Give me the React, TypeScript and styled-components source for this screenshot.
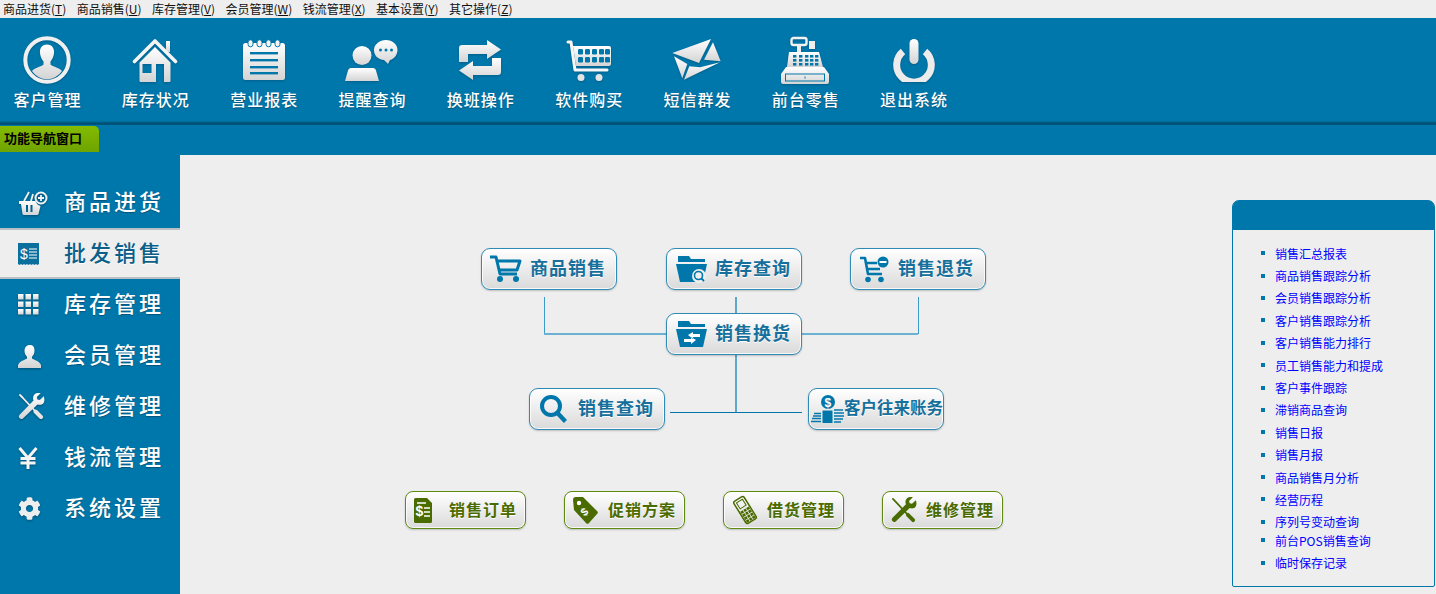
import React from 'react';
import styled, { createGlobalStyle } from 'styled-components';
import { FaCog } from 'react-icons/fa';

const BLUE = '#0077aa';
const CJK = '"Noto Sans CJK SC", "Liberation Sans", sans-serif';

const GlobalStyle = createGlobalStyle`
  html, body {
    margin: 0;
    padding: 0;
    background: #eeeeee;
  }
  body {
    width: 1436px;
    height: 594px;
    overflow: hidden;
    font-family: ${CJK};
  }
`;

const menuItems = [
  { label: '商品进货', key: 'T' },
  { label: '商品销售', key: 'U' },
  { label: '库存管理', key: 'V' },
  { label: '会员管理', key: 'W' },
  { label: '钱流管理', key: 'X' },
  { label: '基本设置', key: 'Y' },
  { label: '其它操作', key: 'Z' },
];

const reportLinks = [
  '销售汇总报表',
  '商品销售跟踪分析',
  '会员销售跟踪分析',
  '客户销售跟踪分析',
  '客户销售能力排行',
  '员工销售能力和提成',
  '客户事件跟踪',
  '滞销商品查询',
  '销售日报',
  '销售月报',
  '商品销售月分析',
  '经营历程',
  '序列号变动查询',
  '前台POS销售查询',
  '临时保存记录',
];

// shared gradients, referenced by the toolbar and sidebar icons
const SharedDefs = () => (
  <DefsHolder>
    <defs>
      <linearGradient id="silver" x1="0" y1="0" x2="0" y2="1">
        <stop offset="0" stopColor="#ffffff" />
        <stop offset="1" stopColor="#d4d4d4" />
      </linearGradient>
    </defs>
  </DefsHolder>
);

const S = 'url(#silver)';

const CustomerIcon = () => (
  <svg width="48" height="48" viewBox="0 0 48 48">
    <circle cx="24" cy="24" r="21.7" fill="none" stroke="#f0f0f0" strokeWidth="4" />
    <path fill={S} d="M24 8.500c-5 0-7.600 3.800-7 8.700.4 3.200 1.600 6.200 3.500 8.300v3c-2 2.200-8.500 3-11.500 6.500a17.800 17.800 0 0 0 30 0c-3-3.500-9.500-4.300-11.500-6.500v-3c1.900-2.100 3.100-5.100 3.500-8.300.6-4.900-2-8.700-7-8.700z" />
  </svg>
);

const HouseIcon = () => (
  <svg width="46" height="45" viewBox="0 0 46 45">
    <path fill={S} d="M34 3h4v11h-4z" />
    <path fill="none" stroke="#f4f4f4" strokeWidth="3.600" strokeLinecap="round" strokeLinejoin="round" d="M2.500 23.500 23 3l20.500 20.500" />
    <path fill={S} fillRule="evenodd" d="M23 9 38.500 24.500V43a1 1 0 0 1-1 1H32V26h-8v18H8.500a1 1 0 0 1-1-1V24.500zM10.500 26v9h9v-9z" />
  </svg>
);

const NotepadIcon = () => (
  <svg width="44" height="42" viewBox="0 0 44 42">
    <rect x="1" y="4" width="42" height="37" rx="2.500" fill={S} />
    {[6, 15, 24, 33].map((x) => (
      <rect key={x} x={x} y="0.800" width="5" height="7" rx="2.500" fill="#f4f4f4" stroke={BLUE} strokeWidth="1" />
    ))}
    {[13, 20, 27, 33].map((y) => (
      <rect key={y} x="8" y={y} width="28" height="2.400" fill={BLUE} />
    ))}
  </svg>
);

const ReminderIcon = () => (
  <svg width="54" height="44" viewBox="0 0 54 44">
    <circle cx="17" cy="17.500" r="9.500" fill={S} />
    <path fill={S} d="M6 30h22c1.500 0 2.500 1 3 2.500L34 43H0l3-10.500C3.500 31 4.500 30 6 30z" />
    <path fill={S} d="M41 2c6.500 0 11.500 4.500 11.500 10S48 21.500 45 22l-2 4-4-4c-6-.5-10-4.500-10-10S34.500 2 41 2z" />
    {[35.500, 41, 46.500].map((x) => (
      <circle key={x} cx={x} cy="12" r="1.500" fill={BLUE} />
    ))}
  </svg>
);

const SwapIcon = () => (
  <svg width="44" height="40" viewBox="0 0 44 40">
    <path fill={S} d="M1 22V8a3 3 0 0 1 3-3h25V0l14 9.500L29 19v-5H10v8z" />
    <path fill={S} d="M43 18v14a3 3 0 0 1-3 3H15v5L1 30.500 15 21v5h19v-8z" />
  </svg>
);

const BasketCartIcon = () => (
  <svg width="46" height="43" viewBox="0 0 46 43">
    <path fill="none" stroke="#f6f6f6" strokeWidth="3" strokeLinecap="round" strokeLinejoin="round" d="M2 3h3l4 28h32" />
    <path fill={S} d="M7 7h36a2 2 0 0 1 2 2v16a2 2 0 0 1-2 2H10z" />
    {[12, 19, 26, 33, 39].map((x) =>
      [10, 18].map((y) => <rect key={`${x}-${y}`} x={x} y={y} width="5" height="5.500" rx="1.200" fill={BLUE} />),
    )}
    <circle cx="15" cy="38.500" r="3.500" fill="#e4e4e4" />
    <circle cx="33" cy="38.500" r="3.500" fill="#e4e4e4" />
  </svg>
);

const EnvelopeIcon = () => (
  <svg width="49" height="42" viewBox="0 0 49 42">
    <path fill={S} d="M.3 14 39 0 27 24z" />
    <path fill={S} d="M41 3.300 48.700 22.300 32 20.700z" />
    <path fill={S} d="M2 17.300 15.300 25 10.300 39.300z" />
    <path fill={S} d="M17.300 27.300 28 28.300 48 23.300 12 40.700z" />
  </svg>
);

const RegisterIcon = () => (
  <svg width="50" height="49" viewBox="0 0 50 49">
    <rect x="11.500" y="2" width="15" height="7" rx="2" fill="none" stroke="#f2f2f2" strokeWidth="2.400" />
    <rect x="17" y="9" width="4" height="7" fill="#eeeeee" />
    <rect x="29" y="5" width="6" height="8" fill="#eeeeee" />
    <path fill={S} d="M9 16h30l4 15H7z" />
    {[13, 19, 25, 30, 35].map((x) =>
      [19, 23, 27].map((y) => <rect key={`${x}-${y}`} x={x} y={y} width="3.400" height="2.600" fill={BLUE} />),
    )}
    <path fill={S} d="M6 31h38l5 7v8a2 2 0 0 1-2 2H3a2 2 0 0 1-2-2v-8z" />
    <rect x="5.500" y="38" width="39" height="7" fill="none" stroke={BLUE} strokeWidth="1" />
    <rect x="24.500" y="40.500" width="1" height="2" fill={BLUE} />
  </svg>
);

const PowerIcon = () => (
  <svg width="44" height="44" viewBox="0 0 44 44">
    <path fill="none" stroke="#ececec" strokeWidth="7" d="M11 13.500a17.300 17.300 0 1 0 22 0" />
    <rect x="17.500" y="1" width="9" height="25" rx="4.500" fill={S} />
  </svg>
);

const toolbarItems = [
  { label: '客户管理', icon: <CustomerIcon /> },
  { label: '库存状况', icon: <HouseIcon /> },
  { label: '营业报表', icon: <NotepadIcon /> },
  { label: '提醒查询', icon: <ReminderIcon /> },
  { label: '换班操作', icon: <SwapIcon /> },
  { label: '软件购买', icon: <BasketCartIcon /> },
  { label: '短信群发', icon: <EnvelopeIcon /> },
  { label: '前台零售', icon: <RegisterIcon /> },
  { label: '退出系统', icon: <PowerIcon /> },
];

const BasketIcon = () => (
  <svg width="30" height="28" viewBox="0 0 30 28">
    <circle cx="23" cy="9" r="5.500" fill="none" stroke="#f2f2f2" strokeWidth="2" />
    <path stroke="#f2f2f2" strokeWidth="1.800" d="M20 9h6M23 6v6" />
    <path fill="none" stroke="#f2f2f2" strokeWidth="1.800" d="M6 12l5-9M13 12l2-7" />
    <path fill={S} fillRule="evenodd" d="M1 12h16.500a7.500 7.500 0 0 0 5 5L20.500 25a1.500 1.500 0 0 1-1.500 1H6a1.500 1.500 0 0 1-1.500-1L3 15H1zM8 16v7h2v-7zM12.500 16v7h2v-7z" />
  </svg>
);

const ReceiptIcon = () => (
  <svg width="22" height="24" viewBox="0 0 22 24">
    <path fill="#0b6f9e" d="M0 1h21v21l-1.500 1-1.500-1-1.500 1-1.500-1-1.500 1-1.500-1-1.500 1-1.500-1-1.500 1-1.500-1-1.500 1-1.500-1-1.500 1L0 22z" />
    <GlyphText x="2" y="16.500" fontSize="14" fill="#ffffff">$</GlyphText>
    <path stroke="#ffffff" strokeWidth="1.200" d="M11 7h8M11 10h8M11 13h8M11 16h8" />
  </svg>
);

const GridIcon = () => (
  <svg width="21" height="21" viewBox="0 0 21 21">
    {[0, 7.500, 15].map((x) =>
      [0, 7.500, 15].map((y) => <rect key={`${x}-${y}`} x={x} y={y} width="5.500" height="5.500" fill={S} />),
    )}
  </svg>
);

const UserIcon = () => (
  <svg width="24" height="24" viewBox="0 0 24 24">
    <path fill={S} d="M12 1c-3.600 0-5.500 2.600-5.500 5.800 0 2.400 1 4.700 2.500 6v1.700C7 16 1.500 17 0 21v3h23v-3c-1.500-4-7-5-9-6.500v-1.700c1.500-1.300 2.500-3.600 2.500-6C16.500 3.600 15.600 1 12 1z" />
  </svg>
);

const ToolsIcon = ({ color = S, size = 27 }: { color?: string; size?: number }) => (
  <svg width={size} height={size} viewBox="0 0 27 27">
    <path fill="none" stroke={color === S ? '#f0f0f0' : color} strokeWidth="1.800" strokeLinecap="round" d="M2 2l3 3 M4 4l14 15" />
    <path stroke={color === S ? '#e6e6e6' : color} strokeWidth="4" strokeLinecap="round" d="M17.500 18.500l5.500 5.500" />
    <path fill={color} d="M25.800 3.300l-4 3.800-2.400-.5-.6-2.500 3.800-3.900c-3.200-.8-6.300.3-7.300 3.200-.5 1.500-.3 3 .2 4.200L1.400 21.900a2.500 2.500 0 0 0 3.500 3.500L19.500 11.400c1.300.5 2.900.6 4.300.1 2.900-1.100 3.100-5.300 2-8.200z" />
  </svg>
);

const YenIcon = () => (
  <svg width="20" height="22" viewBox="0 0 20 22">
    <path fill="none" stroke="#f4f4f4" strokeWidth="3" d="M1.500 1l8.500 10 8.500-10M10 11v11M2.500 11.500h15M2.500 16h15" />
  </svg>
);

const sidebarItems = [
  { label: '商品进货', icon: <BasketIcon /> },
  { label: '批发销售', icon: <ReceiptIcon />, active: true },
  { label: '库存管理', icon: <GridIcon /> },
  { label: '会员管理', icon: <UserIcon /> },
  { label: '维修管理', icon: <ToolsIcon /> },
  { label: '钱流管理', icon: <YenIcon /> },
  { label: '系统设置', icon: <FaCog size={23} color="#eeeeee" /> },
];

const CartLine = () => (
  <svg width="33" height="28" viewBox="0 0 33 28">
    <path fill="none" stroke={BLUE} strokeWidth="3" strokeLinejoin="round" d="M0 2h6l4 17h17M7 6h23l-3 9H9" />
    <circle cx="10" cy="24" r="3" fill={BLUE} />
    <circle cx="26" cy="24" r="3" fill={BLUE} />
  </svg>
);

const FolderBase = ({ children }: { children: React.ReactNode }) => (
  <svg width="32" height="27" viewBox="0 0 32 27">
    <path fill={BLUE} d="M2 0h11l2 3h14v3H2z" />
    <path fill={BLUE} d="M0 8h31l-4 18H4z" />
    {children}
  </svg>
);

const FolderSearch = () => (
  <FolderBase>
    <circle cx="23" cy="20" r="7" fill="#eeeeee" />
    <circle cx="22.500" cy="19.500" r="4" fill="none" stroke={BLUE} strokeWidth="1.600" />
    <path stroke={BLUE} strokeWidth="1.800" d="M25.500 22.500l2.500 2.500" />
  </FolderBase>
);

const FolderSwap = () => (
  <FolderBase>
    <path fill="#ffffff" d="M12 14l5-3v2h7v3h-7v2zM20 19l-5-3v2H8v3h7v2z" />
  </FolderBase>
);

const CartMinus = () => (
  <svg width="29" height="27" viewBox="0 0 29 27">
    <path fill="none" stroke={BLUE} strokeWidth="2.600" strokeLinejoin="round" d="M0 2h5l3 16h14M6 7h11M7 13h13" />
    <circle cx="23" cy="6" r="5.500" fill={BLUE} />
    <rect x="19.500" y="5" width="7" height="2" fill="#ffffff" />
    <circle cx="8" cy="23.500" r="2.800" fill={BLUE} />
    <circle cx="21" cy="23.500" r="2.800" fill={BLUE} />
  </svg>
);

const Magnifier = () => (
  <svg width="27" height="28" viewBox="0 0 27 28">
    <circle cx="11" cy="11" r="9" fill="none" stroke={BLUE} strokeWidth="4" />
    <path stroke={BLUE} strokeWidth="4.400" d="M17.500 18l8 8.500" />
  </svg>
);

const MoneyStack = () => (
  <svg width="33" height="28" viewBox="0 0 33 28">
    <circle cx="17" cy="7" r="7" fill={BLUE} />
    <GlyphText x="13.500" y="11.500" fontSize="12" fontWeight="700" fill="#ffffff">$</GlyphText>
    <path fill={BLUE} d="M11.500 15.500h10v12.500h-10z" />
    <path stroke={BLUE} strokeWidth="1.500" d="M3 18.500h7M2 21h8M1 23.500h9M0 26.500h10M23 15h9M23 18h10M23 21h10M23 24h9M23 27h7" />
  </svg>
);

const G = '#4a6b00';

const OrderDoc = () => (
  <svg width="18" height="25" viewBox="0 0 18 25">
    <path fill={G} d="M1.500 0H13l5 5v18.500a1.500 1.500 0 0 1-1.500 1.500h-15A1.500 1.500 0 0 1 0 23.500v-22A1.500 1.500 0 0 1 1.500 0z" />
    <GlyphText x="1.500" y="18" fontSize="14" fontWeight="700" fill="#ffffff">$</GlyphText>
    <path stroke="#ffffff" strokeWidth="1.400" d="M3 5h9M10 10h6M10 14h6M10 18h6" />
  </svg>
);

const PriceTag = () => (
  <svg width="25" height="27" viewBox="0 0 25 27">
    <path fill={G} d="M0 3a3 3 0 0 1 3-3h7l14 14a2 2 0 0 1 0 3l-8 9a2 2 0 0 1-3 0L1 13z" />
    <circle cx="6" cy="6" r="2.200" fill="#ffffff" />
    <GlyphText x="8" y="18" fontSize="11" fontWeight="700" fill="#ffffff" transform="rotate(-40 12 14)">$</GlyphText>
  </svg>
);

const Handset = () => (
  <svg width="26" height="30" viewBox="0 0 26 30">
    <g transform="rotate(-32 13 15)">
      <rect x="7" y="2" width="12" height="26" rx="2" fill="none" stroke={G} strokeWidth="1.500" />
      <rect x="9.500" y="4.500" width="7" height="7" fill="none" stroke={G} strokeWidth="1" />
      <rect x="8" y="14" width="10" height="13" fill={G} />
      <path stroke="#eeeeee" strokeWidth="0.800" d="M8 17h10M8 20.500h10M8 24h10M11.300 14v13M14.700 14v13" />
    </g>
  </svg>
);

const blueNodes = [
  { label: '商品销售', icon: <CartLine />, x: 301, y: 93, pad: 8, gap: 7 },
  { label: '库存查询', icon: <FolderSearch />, x: 486, y: 93, pad: 9, gap: 7 },
  { label: '销售退货', icon: <CartMinus />, x: 670, y: 93, pad: 9, gap: 9 },
  { label: '销售换货', icon: <FolderSwap />, x: 486, y: 158, pad: 9, gap: 7 },
  { label: '销售查询', icon: <Magnifier />, x: 349, y: 233, pad: 10, gap: 11 },
  { label: '客户往来账务', icon: <MoneyStack />, x: 628, y: 233, pad: 2, gap: 0, tight: true },
];

const connectors = [
  { x: 364, y: 142, w: 1, h: 37, color: '#3a9cc6' },
  { x: 364, y: 178, w: 122, h: 2, color: '#6cb0d2' },
  { x: 622, y: 178, w: 116, h: 2, color: '#6cb0d2' },
  { x: 738, y: 142, w: 1, h: 37, color: '#3a9cc6' },
  { x: 555, y: 142, w: 2, h: 16, color: '#5fa8cd' },
  { x: 555, y: 200, w: 2, h: 57, color: '#5fa8cd' },
  { x: 490, y: 257, w: 132, h: 1, color: BLUE },
];

const greenButtons = [
  { label: '销售订单', icon: <OrderDoc /> },
  { label: '促销方案', icon: <PriceTag /> },
  { label: '借货管理', icon: <Handset /> },
  { label: '维修管理', icon: <ToolsIcon color={G} size={26} /> },
];

const App = () => {
  return (
    <Page>
      <GlobalStyle />
      <SharedDefs />
      <MenuBar>
        {menuItems.map((item) => (
          <MenuItem key={item.key}>
            {item.label}(<u>{item.key}</u>)
          </MenuItem>
        ))}
      </MenuBar>
      <Toolbar>
        {toolbarItems.map((item) => (
          <ToolItem key={item.label}>
            <ToolIcon>{item.icon}</ToolIcon>
            <ToolLabel>{item.label}</ToolLabel>
          </ToolItem>
        ))}
      </Toolbar>
      <NavBar>
        <NavTab>功能导航窗口</NavTab>
      </NavBar>
      <Body>
        <Sidebar>
          {sidebarItems.map((item) => (
            <SideRow key={item.label} $active={item.active}>
              <SideIcon $active={item.active}>{item.icon}</SideIcon>
              <SideLabel $active={item.active}>{item.label}</SideLabel>
            </SideRow>
          ))}
        </Sidebar>
        <Center>
          <Diagram>
            {connectors.map((line) => (
              <Connector
                key={`${line.x}-${line.y}-${line.w}`}
                $x={line.x}
                $y={line.y}
                $w={line.w}
                $h={line.h}
                $color={line.color}
              />
            ))}
            {blueNodes.map((node) => (
              <BlueNode key={node.label} $x={node.x} $y={node.y} $pad={node.pad} $gap={node.gap}>
                {node.icon}
                <BlueLabel $tight={node.tight}>{node.label}</BlueLabel>
              </BlueNode>
            ))}
          </Diagram>
          <GreenRow>
            {greenButtons.map((button) => (
              <GreenButton key={button.label}>
                <GreenIcon>{button.icon}</GreenIcon>
                <GreenLabel>{button.label}</GreenLabel>
              </GreenButton>
            ))}
          </GreenRow>
        </Center>
        <ReportPanel>
          <PanelHead />
          <ReportList>
            {reportLinks.map((link) => (
              <ReportItem key={link} $pulled={link.startsWith('前台POS')}>
                <a>{link}</a>
              </ReportItem>
            ))}
          </ReportList>
        </ReportPanel>
      </Body>
    </Page>
  );
};

export default App;

const DefsHolder = styled.svg`
  position: absolute;
  width: 0;
  height: 0;
`;

const GlyphText = styled.text`
  font-family: 'Liberation Sans', sans-serif;
`;

const Page = styled.div`
  display: flex;
  flex-direction: column;
  width: 1436px;
  height: 594px;
  overflow: hidden;
  background: #eeeeee;
`;

const MenuBar = styled.div`
  display: flex;
  align-items: center;
  gap: 10.450px;
  height: 18px;
  padding-left: 3px;
  box-sizing: border-box;
  background: #eeeeee;
`;

const MenuItem = styled.span`
  font-family: ${CJK};
  font-size: 12px;
  line-height: 16px;
  color: #111111;
  white-space: nowrap;
`;

const Toolbar = styled.div`
  display: flex;
  gap: 28.330px;
  height: 107px;
  padding-left: 7px;
  box-sizing: border-box;
  background: linear-gradient(to bottom, ${BLUE} 0, ${BLUE} 103px, #00618a 104px, #004a6b 106px, #005f88 107px);
`;

const ToolItem = styled.div`
  display: flex;
  flex-direction: column;
  align-items: center;
  width: 80px;
  padding-top: 16px;
  box-sizing: border-box;
`;

const ToolIcon = styled.div`
  display: flex;
  align-items: center;
  justify-content: center;
  height: 52px;
  filter: drop-shadow(0 1px 1px rgba(0, 50, 80, 0.35));
`;

const ToolLabel = styled.div`
  margin-top: 1px;
  padding-left: 1px;
  font-family: ${CJK};
  font-size: 16px;
  font-weight: 500;
  letter-spacing: 1px;
  line-height: 24px;
  color: #ffffff;
  white-space: nowrap;
  text-shadow: 0 1px 1px rgba(0, 50, 80, 0.5);
`;

const NavBar = styled.div`
  height: 30px;
  padding-top: 1px;
  box-sizing: border-box;
  background: ${BLUE};
`;

const NavTab = styled.div`
  display: flex;
  align-items: center;
  width: 99px;
  height: 26px;
  padding: 0 0 3px 4px;
  box-sizing: border-box;
  border-top-right-radius: 5px;
  background: linear-gradient(to bottom, #84bb00, #6ea400);
  font-family: ${CJK};
  font-size: 13px;
  font-weight: 700;
  color: #000000;
  white-space: nowrap;
`;

const Body = styled.div`
  display: flex;
  flex: 1;
  min-height: 0;
`;

const Sidebar = styled.div`
  display: flex;
  flex-direction: column;
  width: 180px;
  flex-shrink: 0;
  padding-top: 22px;
  box-sizing: border-box;
  background: ${BLUE};
`;

const SideRow = styled.div<{ $active?: boolean }>`
  display: flex;
  align-items: center;
  height: 51px;
  padding-left: 18px;
  box-sizing: border-box;
  ${(p) =>
    p.$active
      ? `
    background: #eeeeee;
    border-top: 2px solid #b9c0c4;
    border-bottom: 2px solid #b9c0c4;
  `
      : ''}
`;

const SideIcon = styled.div<{ $active?: boolean }>`
  display: flex;
  align-items: center;
  width: 46px;
  flex-shrink: 0;
  filter: ${(p) => (p.$active ? 'none' : 'drop-shadow(0 1px 1px rgba(0, 40, 70, 0.5))')};
`;

const SideLabel = styled.div<{ $active?: boolean }>`
  padding-bottom: 5px;
  font-family: ${CJK};
  font-size: 22px;
  font-weight: 500;
  letter-spacing: 3px;
  line-height: 30px;
  white-space: nowrap;
  color: ${(p) => (p.$active ? '#0b5f88' : '#ffffff')};
  text-shadow: ${(p) => (p.$active ? '0 1px 0 #ffffff' : '0 1px 1px rgba(0, 50, 80, 0.5)')};
`;

const Center = styled.div`
  display: flex;
  flex-direction: column;
  flex: 1;
  min-width: 0;
`;

const Diagram = styled.div`
  position: relative;
  height: 336px;
  flex-shrink: 0;
`;

const Connector = styled.div<{ $x: number; $y: number; $w: number; $h: number; $color: string }>`
  position: absolute;
  left: ${(p) => p.$x}px;
  top: ${(p) => p.$y}px;
  width: ${(p) => p.$w}px;
  height: ${(p) => p.$h}px;
  background: ${(p) => p.$color};
`;

const BlueNode = styled.div<{ $x: number; $y: number; $pad: number; $gap: number }>`
  position: absolute;
  left: ${(p) => p.$x}px;
  top: ${(p) => p.$y}px;
  display: flex;
  align-items: center;
  gap: ${(p) => p.$gap}px;
  width: 136px;
  height: 42px;
  padding-left: ${(p) => p.$pad}px;
  box-sizing: border-box;
  border: 1px solid #2f8ab5;
  border-radius: 9px;
  background: linear-gradient(to bottom, #ffffff, #dadada);
  box-shadow: inset 0 0 0 1px rgba(255, 255, 255, 0.8), 0 1px 2px rgba(0, 0, 0, 0.2);
`;

const BlueLabel = styled.span<{ $tight?: boolean }>`
  padding-bottom: 4px;
  font-family: ${CJK};
  font-size: ${(p) => (p.$tight ? '16.500px' : '18px')};
  font-weight: 700;
  letter-spacing: ${(p) => (p.$tight ? '0' : '1px')};
  color: #17709c;
  white-space: nowrap;
  text-shadow: 0 1px 0 #ffffff;
`;

const GreenRow = styled.div`
  display: flex;
  gap: 38px;
  padding-left: 225px;
`;

const GreenButton = styled.div`
  display: flex;
  align-items: center;
  width: 121px;
  height: 38px;
  padding-left: 8px;
  box-sizing: border-box;
  border: 1px solid #5e8a10;
  border-radius: 8px;
  background: linear-gradient(to bottom, #ffffff, #dadada);
  box-shadow: inset 0 0 0 1px rgba(255, 255, 255, 0.8), 0 1px 2px rgba(0, 0, 0, 0.2);
`;

const GreenIcon = styled.div`
  display: flex;
  justify-content: flex-start;
  width: 27px;
  flex-shrink: 0;
`;

const GreenLabel = styled.span`
  margin-left: 8px;
  padding-bottom: 2px;
  font-family: ${CJK};
  font-size: 16px;
  font-weight: 700;
  letter-spacing: 1px;
  color: #4a6b00;
  white-space: nowrap;
  text-shadow: 0 1px 0 #ffffff;
`;

const ReportPanel = styled.div`
  display: flex;
  flex-direction: column;
  width: 203px;
  height: 387px;
  margin-top: 45px;
  margin-right: 1px;
  box-sizing: border-box;
  flex-shrink: 0;
  border: 1px solid ${BLUE};
  border-radius: 7px 7px 2px 2px;
`;

const PanelHead = styled.div`
  height: 29px;
  flex-shrink: 0;
  background: ${BLUE};
  border-radius: 5px 5px 0 0;
`;

const ReportList = styled.ul`
  margin: 0;
  padding: 12px 0 0 28px;
  list-style: none;
`;

const ReportItem = styled.li<{ $pulled?: boolean }>`
  display: flex;
  align-items: center;
  gap: 10px;
  height: 22.400px;
  margin-top: ${(p) => (p.$pulled ? '-3.800px' : '0')};
  font-family: ${CJK};
  font-size: 12px;
  white-space: nowrap;

  &::before {
    content: '';
    width: 4px;
    height: 4px;
    background: ${BLUE};
  }

  a {
    color: #0000ff;
  }
`;
